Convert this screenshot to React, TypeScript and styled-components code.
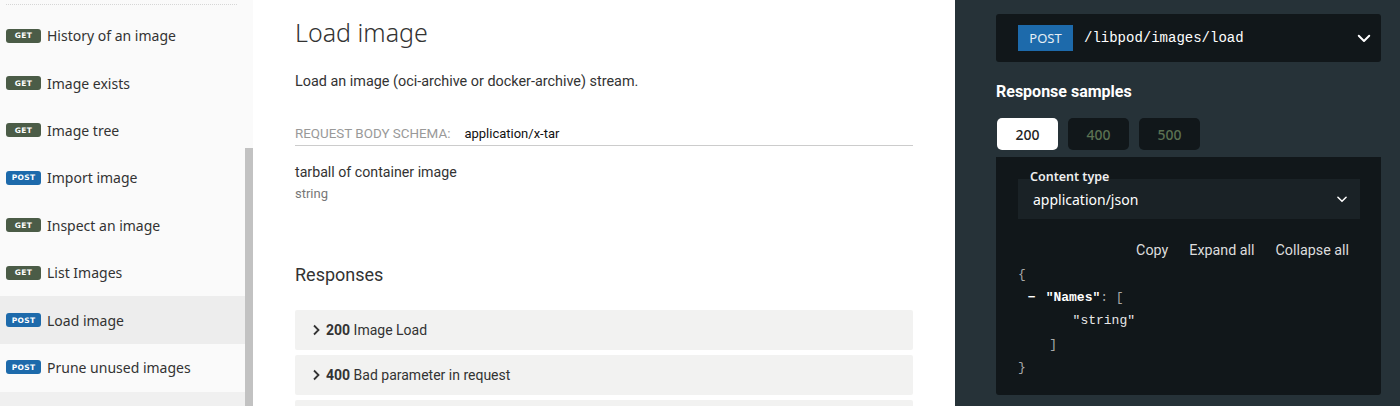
import React from 'react';
import styled, { createGlobalStyle } from 'styled-components';

const GlobalStyle = createGlobalStyle`
  html, body {
    margin: 0;
    padding: 0;
    background: #fff;
    overflow: hidden;
  }
`;

const Page = styled.div`
  display: flex;
  width: 1400px;
  height: 406px;
  overflow: hidden;
`;

/* ---------- sidebar ---------- */

const Sidebar = styled.nav`
  display: flex;
  width: 253px;
  flex-shrink: 0;
  background: #fafafa;
`;

const MenuList = styled.div`
  flex: 1;
  display: flex;
  flex-direction: column;
`;

const Divider = styled.div`
  margin: 4px 8px 7px 6px;
  border-top: 1px dotted #d6d6d6;
`;

const MenuItem = styled.div<{ $active?: boolean }>`
  display: flex;
  align-items: center;
  gap: 6px;
  height: 47.4px;
  flex-shrink: 0;
  padding-left: 6px;
  background: ${p => (p.$active ? '#ededed' : 'transparent')};
  font-family: 'Noto Sans', 'Open Sans', sans-serif;
  font-size: 14px;
  color: #333;
`;

const MenuBand = styled.div`
  flex: 1;
  margin-top: 1px;
  background: #f0f0f0;
`;

const Badge = styled.span<{ $method: 'get' | 'post' }>`
  display: inline-flex;
  align-items: center;
  justify-content: center;
  width: 35px;
  height: 14px;
  border-radius: 3px;
  background: ${p => (p.$method === 'get' ? '#4b5c47' : '#1d6aab')};
  color: #fff;
  font-family: 'DejaVu Sans', sans-serif;
  font-size: 7.5px;
  font-weight: 700;
  letter-spacing: 0.3px;
  text-transform: uppercase;
`;

const ScrollTrack = styled.div`
  width: 8px;
  display: flex;
  flex-direction: column;
`;

const ScrollThumb = styled.div`
  margin-top: 148px;
  flex: 1;
  background: #c2c2c2;
`;

/* ---------- main ---------- */

const Main = styled.main`
  flex: 1;
  padding: 0 42px;
  background: #fff;
  font-family: Roboto, 'Liberation Sans', sans-serif;
  color: #333;
`;

const Title = styled.h1`
  margin: 17px 0 0;
  font-family: 'Noto Sans', 'Open Sans', sans-serif;
  font-size: 25px;
  font-weight: 300;
  line-height: 30px;
  color: #333;
`;

const Description = styled.p`
  margin: 25px 0 0;
  font-size: 14.4px;
  line-height: 20px;
`;

const SchemaHeader = styled.div`
  display: flex;
  align-items: baseline;
  gap: 14px;
  margin-top: 33px;
  padding-bottom: 2px;
  border-bottom: 1px solid #ccc;
  font-size: 13px;
  line-height: 18px;
`;

const SchemaLabel = styled.span`
  font-size: 13.4px;
  color: #999;
  text-transform: uppercase;
`;

const SchemaType = styled.span`
  color: #111;
  font-weight: 400;
`;

const FieldName = styled.div`
  margin-top: 16px;
  font-size: 14.2px;
  line-height: 20px;
`;

const FieldType = styled.div`
  margin-top: 3px;
  font-size: 13px;
  line-height: 18px;
  color: #777;
`;

const SectionTitle = styled.h2`
  margin: 60px 0 0;
  font-size: 18px;
  font-weight: 400;
  line-height: 24px;
  color: #333;
`;

const ResponseList = styled.div`
  display: flex;
  flex-direction: column;
  gap: 5px;
  margin-top: 23px;
`;

const ResponseRow = styled.div`
  display: flex;
  align-items: center;
  gap: 5px;
  height: 40px;
  padding: 0 17px;
  border-radius: 2px;
  background: #f2f2f1;
  font-size: 14px;
  color: #333;
`;

const Code = styled.strong`
  font-weight: 700;
`;

/* ---------- right panel ---------- */

const Right = styled.aside`
  width: 445px;
  flex-shrink: 0;
  padding: 14px 19px 0 41px;
  box-sizing: border-box;
  background: #263238;
  font-family: Roboto, 'Liberation Sans', sans-serif;
`;

const Endpoint = styled.div`
  display: flex;
  align-items: center;
  height: 48px;
  padding: 0 8px 0 22px;
  border-radius: 3px;
  background: #11171a;
`;

const HttpVerb = styled.span`
  display: inline-flex;
  align-items: center;
  justify-content: center;
  width: 55px;
  height: 26px;
  background: #1d6aab;
  color: #e6eef5;
  font-family: 'Noto Sans', 'Open Sans', sans-serif;
  font-size: 13px;
  text-transform: uppercase;
`;

const Path = styled.span`
  flex: 1;
  margin-left: 11px;
  font-family: 'Liberation Mono', monospace;
  font-size: 14px;
  color: #fff;
`;

const PanelTitle = styled.h3`
  margin: 20px 0 0;
  font-size: 16px;
  font-weight: 700;
  line-height: 20px;
  color: #fff;
`;

const Tabs = styled.div`
  display: flex;
  gap: 10px;
  margin-top: 16px;
  padding-left: 1px;
`;

const Tab = styled.button<{ $active?: boolean }>`
  width: 61px;
  height: 32px;
  padding: 0;
  border: 0;
  border-radius: 5px;
  background: ${p => (p.$active ? '#fff' : '#11171a')};
  color: ${p => (p.$active ? '#222' : '#5b7152')};
  font-family: 'Noto Sans', 'Open Sans', sans-serif;
  font-size: 14px;
  font-weight: 500;
`;

const SamplePanel = styled.div`
  margin-top: 7px;
  height: 238px;
  padding: 15px 21px 0 22px;
  box-sizing: border-box;
  border-radius: 0 0 3px 3px;
  background: #11171a;
`;

const ContentType = styled.div`
  display: flex;
  flex-direction: column;
  background: #1a2226;
  margin-top: 7px;
  padding: 0 11px 0 15px;
  height: 40px;
  position: relative;
`;

const ContentLabel = styled.span`
  position: absolute;
  top: -11px;
  left: 12px;
  font-family: 'Noto Sans', 'Open Sans', sans-serif;
  font-size: 12.5px;
  font-weight: 600;
  color: #eee;
`;

const ContentValue = styled.div`
  display: flex;
  align-items: center;
  justify-content: space-between;
  height: 40px;
  font-family: 'Noto Sans', 'Open Sans', sans-serif;
  font-size: 14px;
  color: #fff;
`;

const Actions = styled.div`
  display: flex;
  justify-content: flex-end;
  gap: 21px;
  margin-top: 21px;
  padding-right: 11px;
  font-size: 14.3px;
  line-height: 20px;
  color: #ddd;
`;

const Json = styled.pre`
  margin: 3px 0 0;
  font-family: 'Liberation Mono', monospace;
  font-size: 13px;
  line-height: 23.2px;
  color: #e8e8e8;
`;

const Collapser = styled.span`
  margin: 0 10px 0 2px;
  color: #fff;
  font-weight: 700;
`;

const Key = styled.span`
  color: #fff;
  font-weight: 700;
`;

const Punct = styled.span`
  color: #a8a8a8;
`;

const Chevron = ({ size = 14 }: { size?: number }) => (
  <svg width={size} height={size} viewBox="0 0 24 24" fill="none" stroke="#fff" strokeWidth="2.6" strokeLinecap="round" strokeLinejoin="round">
    <polyline points="5 9 12 16 19 9" />
  </svg>
);

const RightArrow = () => (
  <svg width="9" height="12" viewBox="0 0 9 12" fill="none" stroke="#333" strokeWidth="1.8">
    <polyline points="2 1.5 6.5 6 2 10.5" />
  </svg>
);

const menu: { method: 'get' | 'post'; label: string; active?: boolean }[] = [
  { method: 'get', label: 'History of an image' },
  { method: 'get', label: 'Image exists' },
  { method: 'get', label: 'Image tree' },
  { method: 'post', label: 'Import image' },
  { method: 'get', label: 'Inspect an image' },
  { method: 'get', label: 'List Images' },
  { method: 'post', label: 'Load image', active: true },
  { method: 'post', label: 'Prune unused images' },
];

export default function App() {
  return (
    <>
      <GlobalStyle />
      <Page>
        <Sidebar>
          <MenuList>
            <Divider />
            {menu.map(item => (
              <MenuItem key={item.label} $active={item.active}>
                <Badge $method={item.method}>{item.method}</Badge>
                {item.label}
              </MenuItem>
            ))}
            <MenuBand />
          </MenuList>
          <ScrollTrack>
            <ScrollThumb />
          </ScrollTrack>
        </Sidebar>

        <Main>
          <Title>Load image</Title>
          <Description>Load an image (oci-archive or docker-archive) stream.</Description>
          <SchemaHeader>
            <SchemaLabel>Request Body schema:</SchemaLabel>
            <SchemaType>application/x-tar</SchemaType>
          </SchemaHeader>
          <FieldName>tarball of container image</FieldName>
          <FieldType>string</FieldType>
          <SectionTitle>Responses</SectionTitle>
          <ResponseList>
            <ResponseRow>
              <RightArrow />
              <span>
                <Code>200</Code> Image Load
              </span>
            </ResponseRow>
            <ResponseRow>
              <RightArrow />
              <span>
                <Code>400</Code> Bad parameter in request
              </span>
            </ResponseRow>
            <ResponseRow />
          </ResponseList>
        </Main>

        <Right>
          <Endpoint>
            <HttpVerb>post</HttpVerb>
            <Path>/libpod/images/load</Path>
            <Chevron size={18} />
          </Endpoint>
          <PanelTitle>Response samples</PanelTitle>
          <Tabs>
            <Tab $active>200</Tab>
            <Tab>400</Tab>
            <Tab>500</Tab>
          </Tabs>
          <SamplePanel>
            <ContentType>
              <ContentLabel>Content type</ContentLabel>
              <ContentValue>
                application/json
                <Chevron size={14} />
              </ContentValue>
            </ContentType>
            <Actions>
              <span>Copy</span>
              <span>Expand all</span>
              <span>Collapse all</span>
            </Actions>
            <Json>
              <Punct>{'{'}</Punct>
              {'\n '}
              <Collapser>−</Collapser>
              <Key>"Names"</Key>
              <Punct>: [</Punct>
              {'\n       '}
              <span>"string"</span>
              {'\n    '}
              <Punct>]</Punct>
              {'\n'}
              <Punct>{'}'}</Punct>
            </Json>
          </SamplePanel>
        </Right>
      </Page>
    </>
  );
}
